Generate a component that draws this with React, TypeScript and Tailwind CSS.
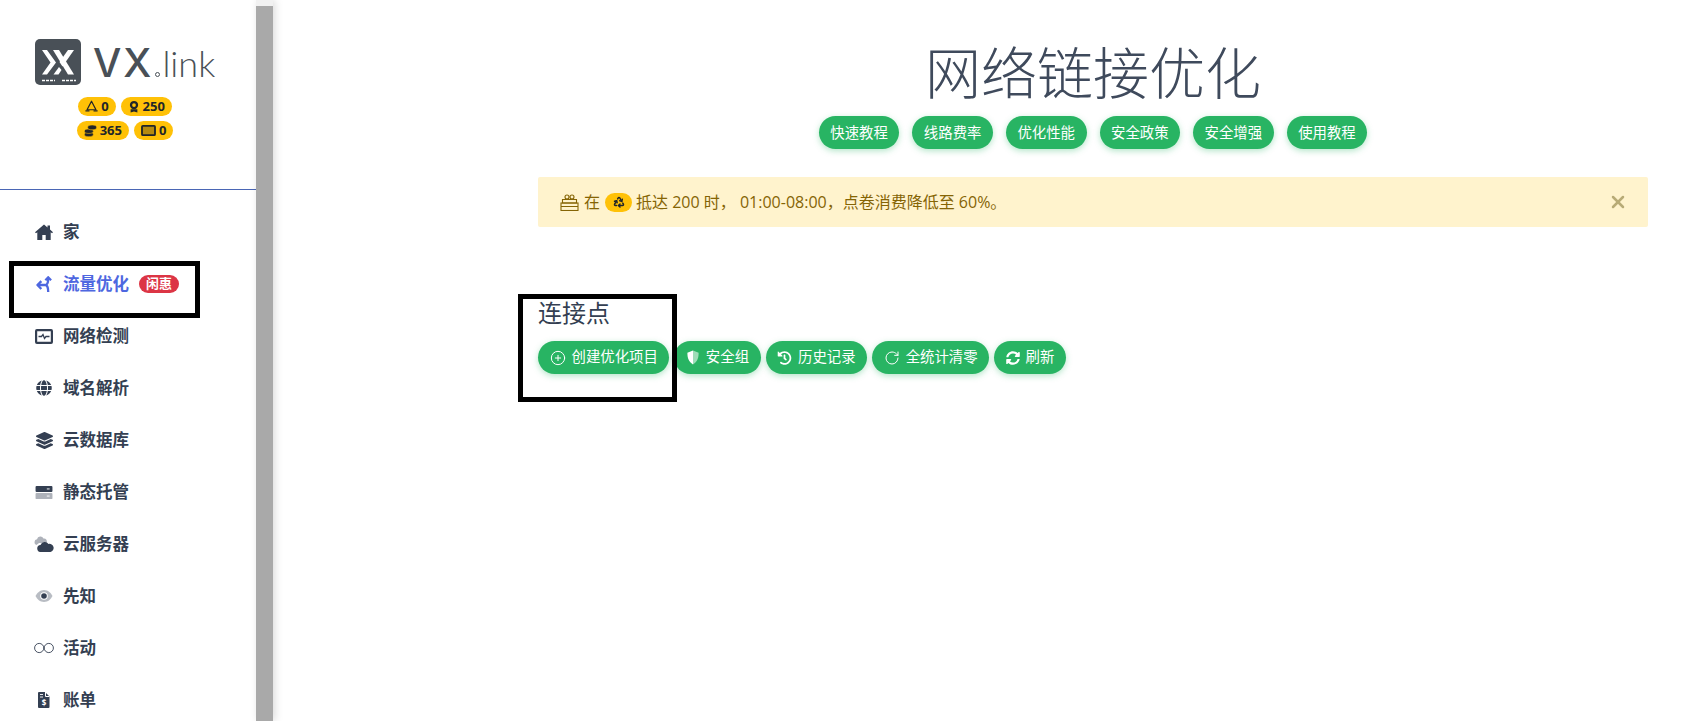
import React from 'react';
import { PlusCircle, RotateCw, X, Recycle } from 'lucide-react';
import { FaGlobe, FaLayerGroup, FaHistory, FaSyncAlt } from 'react-icons/fa';

const FONT = '"Open Sans", "Noto Sans CJK SC", sans-serif';

const Logo = () => (
  <svg viewBox="0 0 46 46" className="w-[46px] h-[46px] shrink-0">
    <rect width="46" height="46" rx="5" fill="#495057" />
    <path d="M7 11h5l9 12.500-9 12H7l8.500-12z" fill="#fff" />
    <path d="M18 11h6l15 24.500h-6z" fill="#fff" />
    <path d="M33 11h6L27.500 27.500l-3-4.500z" fill="#fff" />
    <path d="M24 28l2.500 3-3 4.500h-5z" fill="#fff" />
    <path d="M7 41.500h13M27 41.500h14" stroke="#fff" strokeWidth="1.500" strokeDasharray="3 1" />
  </svg>
);

const Pill = ({ icon, value }: { icon: React.ReactNode; value: string }) => (
  <span className="inline-flex items-center gap-[3px] h-[19px] px-[7px] rounded-full bg-[#ffc107] text-[#212529] text-[13px] font-bold leading-none">
    {icon}
    {value}
  </span>
);

const Triangle = () => (
  <svg viewBox="0 0 16 16" className="w-[13px] h-[13px]" fill="none" stroke="#212529" strokeWidth="1.500">
    <path d="M8 1.500 13.500 12H2.500z" strokeLinejoin="round" />
    <path d="M.5 13.500h5M10.500 13.500h5" />
  </svg>
);

const Medal = () => (
  <svg viewBox="0 0 16 16" className="w-[12px] h-[13px]" fill="#212529">
    <circle cx="8" cy="6" r="5.500" />
    <circle cx="8" cy="6" r="2.500" fill="#ffc107" />
    <path d="M3.500 11.500h9V16l-4.500-1.500L3.500 16z" />
  </svg>
);

const Coins = () => (
  <svg viewBox="0 0 16 16" className="w-[13px] h-[13px]" fill="#212529" stroke="#ffc107" strokeWidth="0.700">
    <ellipse cx="6" cy="12.800" rx="5.500" ry="2.800" />
    <ellipse cx="6" cy="8.800" rx="5.500" ry="2.800" />
    <ellipse cx="10" cy="4.200" rx="5.500" ry="3" />
  </svg>
);

const Ticket = () => (
  <svg viewBox="0 0 16 14" className="w-[15px] h-[13px]">
    <rect x="1" y="2" width="14" height="10" rx="1" fill="#b58a10" stroke="#212529" strokeWidth="2" />
  </svg>
);

const HomeSolid = () => (
  <svg viewBox="0 0 18 16" className="w-[18px] h-[16px]" fill="#343f52">
    <path d="M9 .5 0 8.200l1 1.100 1.300-1.100V16h5v-5h3.400v5h5V8.200L17 9.300l1-1.100-3-2.600V1.500h-2.500v2z" />
  </svg>
);

const Route = () => (
  <svg viewBox="0 0 16 16" className="w-[17px] h-[17px]" fill="none" stroke="#4e67e0" strokeWidth="2.200">
    <path d="M1.500 8.500h7c2.500 0 3 2 3 6.500M11.500 2c0 4-1 6.500-3 6.500" />
    <path d="M5 4.800 1.500 8.500 5 12.200" />
    <path d="M8.800 4 11.500 1.300 14.200 4" />
  </svg>
);

const Monitor = () => (
  <svg viewBox="0 0 18 15" className="w-[18px] h-[15px]" fill="none" stroke="#343f52" strokeWidth="2.200">
    <rect x="1.100" y="1.100" width="15.800" height="12.800" rx="0.800" />
    <path d="M3.500 7.500h3l1.500-2 1.500 4 1.500-2h3.500" strokeWidth="1.300" />
  </svg>
);

const Server = () => (
  <svg viewBox="0 0 18 16" className="w-[18px] h-[15px]">
    <rect y="1" width="18" height="6.500" rx="1" fill="#343f52" />
    <rect y="8.500" width="18" height="6.500" rx="1" fill="#343f52" opacity="0.4" />
    <path d="M12 4.200h3M12 11.800h3" stroke="#fff" strokeWidth="1" />
  </svg>
);

const Clouds = () => (
  <svg viewBox="0 0 20 16" className="w-[20px] h-[16px]">
    <path d="M2.500 9a3 3 0 0 1 .5-5.800A3.500 3.500 0 0 1 9.500 2.500 3 3 0 0 1 12.500 7H5z" fill="#343f52" opacity="0.4" />
    <path d="M7 16a3.500 3.500 0 0 1-.5-7A4.500 4.500 0 0 1 14.500 8 4 4 0 0 1 16.500 16z" fill="#343f52" />
  </svg>
);

const DuoEye = () => (
  <svg viewBox="0 0 18 14" className="w-[18px] h-[14px]">
    <path d="M9 1C5 1 2 4 .5 7 2 10 5 13 9 13s7-3 8.500-6C16 4 13 1 9 1z" fill="#343f52" opacity="0.35" />
    <circle cx="9" cy="7" r="3.800" fill="#fff" />
    <circle cx="9" cy="7" r="2.800" fill="#343f52" />
  </svg>
);

const Loop = () => (
  <svg viewBox="0 0 20 12" className="w-[20px] h-[12px]" fill="none" stroke="#343f52" strokeWidth="0.900">
    <circle cx="5.200" cy="6" r="4.600" />
    <circle cx="14.800" cy="6" r="4.600" />
  </svg>
);

const Bill = () => (
  <svg viewBox="0 0 12 16" className="w-[12px] h-[16px]">
    <path d="M1 0h6l4.500 4.500V15a1 1 0 0 1-1 1H1a1 1 0 0 1-1-1V1a1 1 0 0 1 1-1z" fill="#343f52" />
    <path d="M7.500 0v4.500h4" stroke="#fff" strokeWidth="1" fill="none" />
    <text x="6" y="14" fontSize="8" fontWeight="700" fill="#fff" textAnchor="middle">$</text>
    <path d="M2 2.500h3M2 5h3" stroke="#fff" strokeWidth="0.900" />
  </svg>
);

const GiftLine = () => (
  <svg viewBox="0 0 19 17" className="w-[19px] h-[17px]" fill="none" stroke="#856404" strokeWidth="1.100">
    <rect x="1" y="9" width="17" height="7.500" />
    <path d="M2.500 5.500h14V9h-14zM1 12.500h17" />
    <circle cx="7" cy="3" r="2" />
    <circle cx="12" cy="3" r="2" />
  </svg>
);

const Shield = () => (
  <svg viewBox="0 0 14 16" className="w-[14px] h-[15px]">
    <path d="M7 0.500 1 3c0 5 1 9.500 6 12.500z" fill="#fff" />
    <path d="M7 0.500 13 3c0 5-1 9.500-6 12.500z" fill="#fff" opacity="0.55" />
  </svg>
);

const menu: { label: string; icon: React.ReactNode; active?: boolean }[] = [
  { label: '家', icon: <HomeSolid /> },
  { label: '流量优化', icon: <Route />, active: true },
  { label: '网络检测', icon: <Monitor /> },
  { label: '域名解析', icon: <FaGlobe className="w-[16px] h-[16px] text-[#343f52]" /> },
  { label: '云数据库', icon: <FaLayerGroup className="w-[17px] h-[17px] text-[#343f52]" /> },
  { label: '静态托管', icon: <Server /> },
  { label: '云服务器', icon: <Clouds /> },
  { label: '先知', icon: <DuoEye /> },
  { label: '活动', icon: <Loop /> },
  { label: '账单', icon: <Bill /> },
];

const tabs = ['快速教程', '线路费率', '优化性能', '安全政策', '安全增强', '使用教程'];

const actions = [
  { label: '创建优化项目', icon: <PlusCircle className="w-[16px] h-[16px]" strokeWidth={1.500} /> },
  { label: '安全组', icon: <Shield /> },
  { label: '历史记录', icon: <FaHistory className="w-[15px] h-[14px]" /> },
  { label: '全统计清零', icon: <RotateCw className="w-[16px] h-[16px]" strokeWidth={1.500} /> },
  { label: '刷新', icon: <FaSyncAlt className="w-[14px] h-[14px]" /> },
];

export default function App() {
  return (
    <div className="relative flex h-[721px] overflow-hidden bg-white" style={{ fontFamily: FONT }}>
      {/* sidebar */}
      <aside className="w-[256px] shrink-0">
        <div className="h-[190px] border-b border-[#4a66b5] pt-[39px]">
          <div className="flex items-center h-[46px] pl-[35px]">
            <Logo />
            <div className="ml-[12px] flex items-end h-[46px] pb-[7px] leading-none text-[#495057]">
              <span className="text-[40px] leading-[30px] font-medium tracking-[2px]" style={{ fontFamily: 'Inter, sans-serif' }}>VX</span>
              <span className="mb-[1px] ml-[2px] mr-[2px] w-[5px] h-[5px] rounded-full border border-[#495057]" />
              <span className="text-[36px] leading-[30px] font-light" style={{ fontFamily: 'Lato, sans-serif' }}>link</span>
            </div>
          </div>
          <div className="mt-[12px] flex justify-center gap-[5px] pr-[6px]">
            <Pill icon={<Triangle />} value="0" />
            <Pill icon={<Medal />} value="250" />
          </div>
          <div className="mt-[5px] flex justify-center gap-[5px] pr-[6px]">
            <Pill icon={<Coins />} value="365" />
            <Pill icon={<Ticket />} value="0" />
          </div>
        </div>
        <nav className="pt-[16px]">
          {menu.map((item) => (
            <div key={item.label} className="flex items-center h-[52px] pl-[34px]">
              <span className="w-[20px] flex justify-center">{item.icon}</span>
              <span className={`ml-[9px] text-[16.500px] font-semibold ${item.active ? 'text-[#4e67e0]' : 'text-[#343f52]'}`}>
                {item.label}
              </span>
              {item.active && (
                <span className="ml-[10px] px-[7px] h-[18px] flex items-center rounded-full bg-[#dc3545] text-white text-[13px] font-bold">
                  闲惠
                </span>
              )}
            </div>
          ))}
        </nav>
      </aside>

      {/* scrollbar */}
      <div className="w-[17px] shrink-0 bg-[#f1f1f1] pt-[6px] shadow-[2px_0_8px_rgba(0,0,0,0.15)]">
        <div className="h-full bg-[#a9a9a9]" />
      </div>

      {/* main */}
      <main className="flex-1 pl-[265px] pr-[36px] text-[#343f52]">
        <h1 className="mt-[34px] text-center text-[56px] leading-[76px] font-light text-[#3f4a5c]">网络链接优化</h1>
        <div className="mt-[6px] flex justify-center gap-[13px]">
          {tabs.map((t) => (
            <span key={t} className="inline-flex items-center h-[33px] px-[11.500px] rounded-full bg-[#28b463] text-white text-[14.400px] shadow-[0_2px_6px_rgba(40,180,99,0.35)]">
              {t}
            </span>
          ))}
        </div>
        <div className="mt-[28px] flex items-center justify-between h-[50px] pl-[22px] pr-[20px] bg-[#fff3cd] text-[#856404] text-[16px] rounded-[2px]">
          <div className="flex items-center gap-[5px]">
            <GiftLine />
            <span>在</span>
            <span className="inline-flex items-center justify-center w-[27px] h-[19px] rounded-full bg-[#ffc107]">
              <Recycle className="w-[12px] h-[12px] text-[#212529]" strokeWidth={3} />
            </span>
            <span className="-ml-[1px]">抵达 200 时， 01:00-08:00，点卷消费降低至 60%。</span>
          </div>
          <X className="w-[20px] h-[20px] text-[#b8ab76]" strokeWidth={3} />
        </div>
        <h2 className="mt-[68px] text-[24px] leading-[36px]">连接点</h2>
        <div className="mt-[10px] flex gap-[5px]">
          {actions.map((a) => (
            <button key={a.label} className="inline-flex items-center gap-[6px] h-[33px] px-[11.500px] rounded-full bg-[#28b463] text-white text-[14.400px] leading-none shadow-[0_2px_6px_rgba(40,180,99,0.35)]">
              {a.icon}
              {a.label}
            </button>
          ))}
        </div>
      </main>

      {/* black annotation boxes drawn over the screenshot */}
      <div className="absolute left-[9px] top-[261px] w-[191px] h-[57px] border-[5px] border-black" />
      <div className="absolute left-[518px] top-[294px] w-[159px] h-[108px] border-[5px] border-black" />
    </div>
  );
}
